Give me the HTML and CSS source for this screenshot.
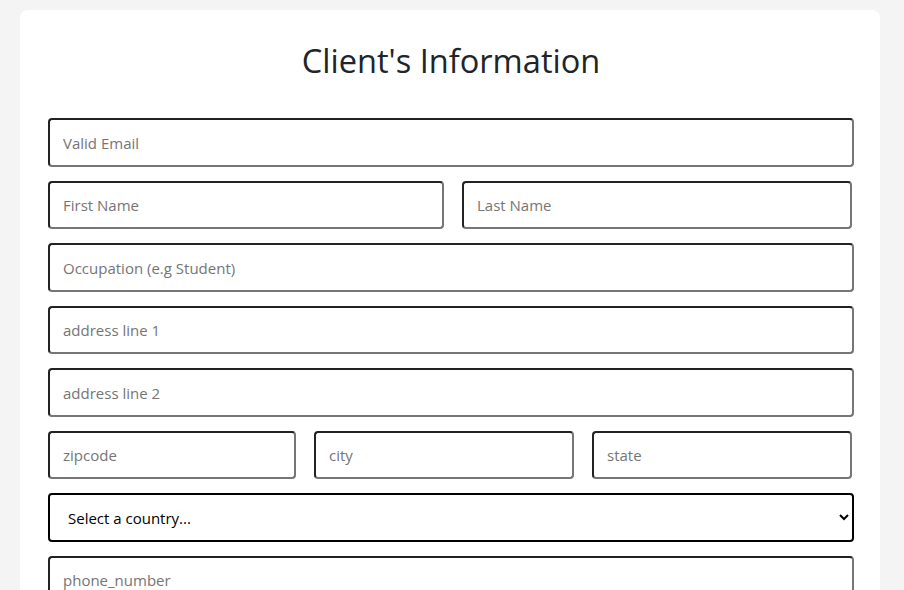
FILE: index.html
```html
<!DOCTYPE html>
<html lang="en">
<head>
<meta charset="utf-8">
<title>Client's Information</title>
<link rel="stylesheet" href="styles.css">
</head>
<body>
<main class="card">
  <h1 class="title">Client's Information</h1>
  <form class="form">
    <input class="field" type="email" placeholder="Valid Email">
    <div class="row row-2">
      <input class="field" type="text" placeholder="First Name">
      <input class="field" type="text" placeholder="Last Name">
    </div>
    <input class="field" type="text" placeholder="Occupation (e.g Student)">
    <input class="field" type="text" placeholder="address line 1">
    <input class="field" type="text" placeholder="address line 2">
    <div class="row row-3">
      <input class="field" type="text" placeholder="zipcode">
      <input class="field" type="text" placeholder="city">
      <input class="field" type="text" placeholder="state">
    </div>
    <select class="country">
      <option>Select a country...</option>
      <option>United States</option>
      <option>Canada</option>
    </select>
    <input class="field" type="tel" placeholder="phone_number">
  </form>
</main>
</body>
</html>
```

FILE: styles.css
```css
html, body {
  margin: 0;
  padding: 0;
}
body {
  background: #f4f4f4;
  font-family: "Open Sans", "Noto Sans", sans-serif;
  color: #212529;
  padding: 10px 24px 0 20px;
}
.card {
  background: #fff;
  border-radius: 8px;
  padding: 30px 26px 40px 28px;
  min-height: 700px;
}
.title {
  margin: 0 0 37px 0;
  font-weight: 400;
  font-size: 32.6px;
  line-height: 41px;
  text-align: center;
  color: #212529;
}
.form {
  display: flex;
  flex-direction: column;
  gap: 14px;
}
.row {
  display: grid;
  gap: 18px;
  width: 804px;
}
.row-2 { grid-template-columns: 396px 390px; }
.row-3 { grid-template-columns: 248px 260px 260px; }
.field {
  box-sizing: border-box;
  height: 48.5px;
  width: 100%;
  margin: 0;
  padding: 1px 13px 0 13px;
  border-width: 2px;
  border-style: solid;
  border-color: #222 #767676 #767676 #222;
  border-radius: 4px;
  font-family: inherit;
  font-size: 15px;
  color: #212529;
  background: #fff;
}
.field::placeholder {
  color: #757575;
}
.country {
  box-sizing: border-box;
  height: 48.5px;
  width: 100%;
  margin: 0;
  padding: 1px 12px 0 14px;
  border: 2px solid #000;
  border-radius: 4px;
  font-family: inherit;
  font-size: 15px;
  color: #000;
  background: #fff;
}
```
